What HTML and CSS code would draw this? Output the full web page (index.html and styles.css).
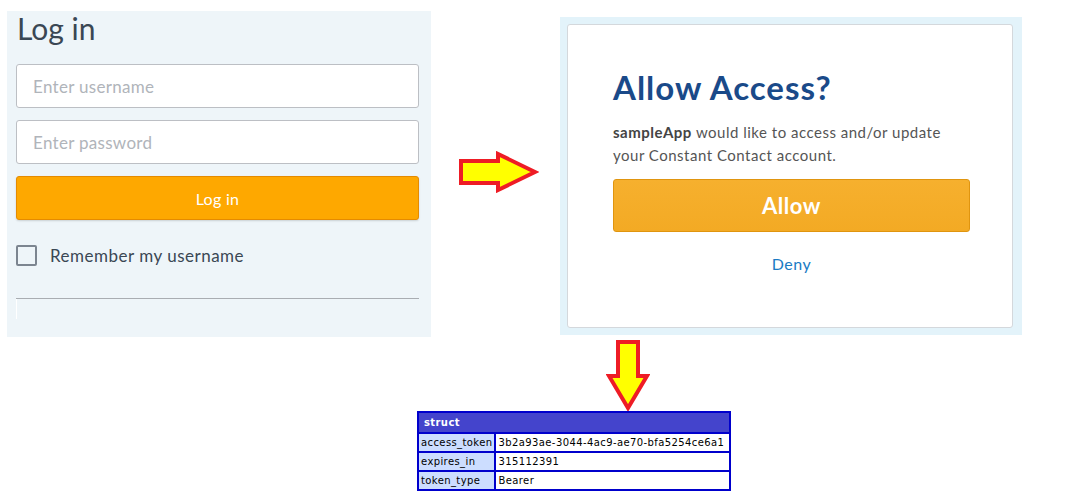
FILE: index.html
```html
<!DOCTYPE html>
<html lang="en">
<head>
    <meta charset="UTF-8">
    <meta name="viewport" content="width=device-width, initial-scale=1.0">
    <title>OAuth flow</title>
    <link rel="stylesheet" href="styles.css">
</head>
<body>
    <div class="top-row">
        <div class="login-panel">
            <h1 class="login-title">Log in</h1>
            <input class="login-input" type="text" placeholder="Enter username">
            <input class="login-input" type="password" placeholder="Enter password">
            <button class="login-btn">Log in</button>
            <label class="remember">
                <span class="checkbox"></span>
                Remember my username
            </label>
            <div class="divider"></div>
            <div class="stub"></div>
        </div>

        <svg class="arrow-right" width="80" height="42" viewBox="0 0 80 42">
            <polygon points="2,10 39,10 39,3 76,21 39,39 39,32 2,32" fill="#ffff00" stroke="#ee1c25" stroke-width="4" stroke-linejoin="miter"/>
        </svg>

        <div class="access-panel">
            <div class="access-card">
                <h2 class="access-title">Allow Access?</h2>
                <p class="access-text"><strong>sampleApp</strong> would like to access and/or update your Constant Contact account.</p>
                <button class="allow-btn">Allow</button>
                <a class="deny-link" href="#">Deny</a>
            </div>
        </div>
    </div>

    <div class="bottom">
        <svg class="arrow-down" width="44" height="71" viewBox="0 0 44 71">
            <polygon points="12,2 32,2 32,36 41,36 22,68 3,36 12,36" fill="#ffff00" stroke="#ee1c25" stroke-width="4" stroke-linejoin="miter"/>
        </svg>

        <table class="cfdump">
            <tr><th colspan="2">struct</th></tr>
            <tr><td class="key">access_token</td><td>3b2a93ae-3044-4ac9-ae70-bfa5254ce6a1</td></tr>
            <tr><td class="key">expires_in</td><td>315112391</td></tr>
            <tr><td class="key">token_type</td><td>Bearer</td></tr>
        </table>
    </div>
</body>
</html>
```

FILE: styles.css
```css
body {
    margin: 0;
    padding: 11px 0 0 7px;
    background: #fff;
    font-family: Lato, "Open Sans", sans-serif;
}
.top-row {
    display: flex;
    align-items: flex-start;
}
.login-panel {
    width: 403px;
    height: 326px;
    padding: 0 12px 0 9px;
    background: #eef5f9;
    display: flex;
    flex-direction: column;
}
.login-title {
    margin: 0;
    padding-left: 1px;
    font-size: 30px;
    font-weight: 400;
    line-height: 34px;
    color: #3a4754;
}
.login-input {
    height: 44px;
    margin-top: 19px;
    padding: 0 16px;
    border: 1px solid #bcbfc4;
    border-radius: 3px;
    background: #fff;
    font-family: inherit;
    font-size: 17px;
    letter-spacing: 0.3px;
    box-sizing: border-box;
}
.login-input + .login-input {
    margin-top: 12px;
}
.login-input::placeholder {
    color: #b0b4ba;
}
.login-btn {
    height: 44px;
    margin-top: 12px;
    border: 1px solid #e58b00;
    border-radius: 3px;
    background: #fea800;
    color: #fff;
    font-family: inherit;
    font-size: 16px;
    letter-spacing: 0.3px;
    box-shadow: 0 1px 2px rgba(0,0,0,0.15);
}
.remember {
    display: flex;
    align-items: center;
    gap: 13px;
    margin-top: 25px;
    font-size: 17px;
    letter-spacing: 0.5px;
    color: #3a4754;
}
.checkbox {
    width: 17px;
    height: 17px;
    border: 2px solid #7c8590;
    border-radius: 2px;
}
.divider {
    margin-top: 32px;
    border-top: 1px solid #a9adb2;
}
.stub {
    width: 1px;
    height: 20px;
    background: #fff;
}
.arrow-right {
    margin: 140px 0 0 28px;
}
.access-panel {
    margin: 6px 0 0 21px;
    padding: 7px 9px 7px 7px;
    background: #e3f3fa;
}
.access-card {
    width: 399px;
    height: 257px;
    padding: 42px 0 3px 45px;
    border: 1px solid #d4d8dc;
    border-radius: 3px;
    background: #fff;
    display: flex;
    flex-direction: column;
}
.access-title {
    margin: 0;
    font-size: 33px;
    font-weight: 700;
    letter-spacing: 1px;
    line-height: 40px;
    color: #1a4a89;
}
.access-text {
    width: 357px;
    margin: 14px 0 0;
    font-size: 15px;
    letter-spacing: 0.5px;
    line-height: 23px;
    color: #555;
}
.access-text strong {
    color: #444;
}
.allow-btn {
    width: 357px;
    height: 53px;
    margin-top: 12px;
    border: 1px solid #e0950f;
    border-radius: 3px;
    background: linear-gradient(#f6b02e, #f3aa24);
    color: #fff;
    font-family: inherit;
    font-size: 22px;
    font-weight: 700;
    letter-spacing: 0.5px;
}
.deny-link {
    width: 357px;
    margin-top: 22px;
    text-align: center;
    font-size: 16px;
    letter-spacing: 0.5px;
    color: #1a7bc4;
    text-decoration: none;
}
.bottom {
    display: flex;
    flex-direction: column;
    align-items: flex-start;
    padding-left: 410px;
}
.arrow-down {
    margin: 3px 0 0 189px;
}
.cfdump {
    margin-top: 0;
    border-spacing: 2px;
    background: #0000cc;
    font-family: "DejaVu Sans", Verdana, sans-serif;
    font-size: 10px;
    letter-spacing: 0.4px;
    width: 314px;
}
.cfdump th {
    padding: 4px 5px 4px;
    background: #4444cc;
    color: #fff;
    text-align: left;
    font-weight: 700;
}
.cfdump td {
    padding: 2px;
    line-height: 13px;
    white-space: nowrap;
    background: #fff;
    color: #000;
}
.cfdump td.key {
    width: 1px;
    background: #ccddff;
}
```
